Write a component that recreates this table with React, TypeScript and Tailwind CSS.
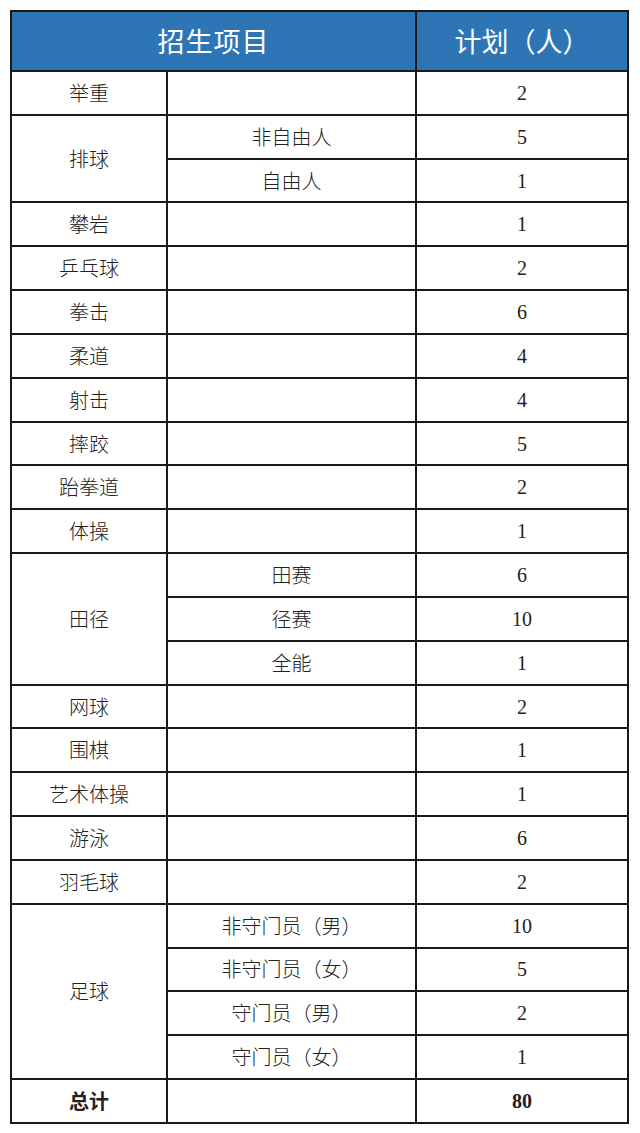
type Row = { sport: string; sub?: string[]; counts: string[] };

const rows: Row[] = [
  { sport: "举重", counts: ["2"] },
  { sport: "排球", sub: ["非自由人", "自由人"], counts: ["5", "1"] },
  { sport: "攀岩", counts: ["1"] },
  { sport: "乒乓球", counts: ["2"] },
  { sport: "拳击", counts: ["6"] },
  { sport: "柔道", counts: ["4"] },
  { sport: "射击", counts: ["4"] },
  { sport: "摔跤", counts: ["5"] },
  { sport: "跆拳道", counts: ["2"] },
  { sport: "体操", counts: ["1"] },
  { sport: "田径", sub: ["田赛", "径赛", "全能"], counts: ["6", "10", "1"] },
  { sport: "网球", counts: ["2"] },
  { sport: "围棋", counts: ["1"] },
  { sport: "艺术体操", counts: ["1"] },
  { sport: "游泳", counts: ["6"] },
  { sport: "羽毛球", counts: ["2"] },
  {
    sport: "足球",
    sub: ["非守门员（男）", "非守门员（女）", "守门员（男）", "守门员（女）"],
    counts: ["10", "5", "2", "1"],
  },
];

const cjk = "font-['Noto_Sans_CJK_SC',sans-serif] font-light text-[20px] text-[#222]";
const num = "font-['Liberation_Serif',serif] text-[20px] text-[#222]";
const cell = "border-2 border-[#1a1a1a] text-center align-middle p-0";

export default function App() {
  return (
    <div className="w-[640px] min-h-[1133px] bg-white pt-[10px] pl-[10px]">
      <table className="border-collapse table-fixed w-[617px]">
        <colgroup>
          <col className="w-[156px]" />
          <col className="w-[249px]" />
          <col className="w-[212px]" />
        </colgroup>
        <thead>
          <tr className="h-[60px] bg-[#2e75b6]">
            <th colSpan={2} className={`${cell} font-['Noto_Sans_CJK_SC',sans-serif] font-normal text-[27px] text-white tracking-[1px]`}>
              招生项目
            </th>
            <th className={`${cell} font-['Noto_Sans_CJK_SC',sans-serif] font-normal text-[27px] text-white`}>
              计划（人）
            </th>
          </tr>
        </thead>
        <tbody>
          {rows.map((r) =>
            r.sub ? (
              r.sub.map((s, i) => (
                <tr key={r.sport + s} className="h-[43.83px]">
                  {i === 0 && (
                    <td rowSpan={r.sub!.length} className={`${cell} ${cjk}`}>
                      {r.sport}
                    </td>
                  )}
                  <td className={`${cell} ${cjk}`}>{s}</td>
                  <td className={`${cell} ${num}`}>{r.counts[i]}</td>
                </tr>
              ))
            ) : (
              <tr key={r.sport} className="h-[43.83px]">
                <td className={`${cell} ${cjk}`}>{r.sport}</td>
                <td className={cell}></td>
                <td className={`${cell} ${num}`}>{r.counts[0]}</td>
              </tr>
            )
          )}
          <tr className="h-[43.83px]">
            <td className={`${cell} font-['Noto_Sans_CJK_SC',sans-serif] font-bold text-[20px] text-[#222]`}>总计</td>
            <td className={cell}></td>
            <td className={`${cell} font-['Liberation_Serif',serif] font-bold text-[20px] text-[#222]`}>80</td>
          </tr>
        </tbody>
      </table>
    </div>
  );
}
